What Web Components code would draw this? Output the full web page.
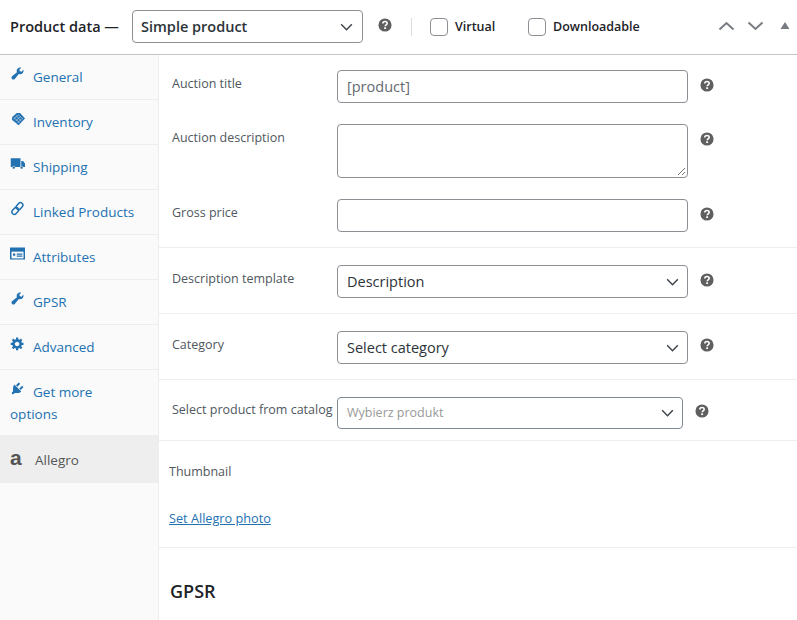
<!DOCTYPE html>
<html><head><meta charset="utf-8"><title>Product data</title>
<style>
html,body{margin:0;padding:0;background:#fff;overflow:hidden}
body{font-family:"Open Sans","Noto Sans",sans-serif;font-size:12.5px;color:#3c434a;width:797px;height:620px}
</style></head><body>
<wc-panel>
 <wc-topbar slot="top"></wc-topbar>
 <wc-tab slot="tabs" icon="wrench">General</wc-tab>
 <wc-tab slot="tabs" icon="tag">Inventory</wc-tab>
 <wc-tab slot="tabs" icon="truck">Shipping</wc-tab>
 <wc-tab slot="tabs" icon="link">Linked Products</wc-tab>
 <wc-tab slot="tabs" icon="attr">Attributes</wc-tab>
 <wc-tab slot="tabs" icon="wrench">GPSR</wc-tab>
 <wc-tab slot="tabs" icon="gear">Advanced</wc-tab>
 <wc-tab slot="tabs" icon="plug" style="padding-bottom:10px">Get more options</wc-tab>
 <wc-tab slot="tabs" icon="a" active>Allegro</wc-tab>

 <wc-section style="padding:15px 0 15px">
  <wc-field label="Auction title" style="margin-bottom:21px"><wc-control kind="input" placeholder>[product]</wc-control></wc-field>
  <wc-field label="Auction description" style="margin-bottom:21px"><wc-control kind="textarea"></wc-control></wc-field>
  <wc-field label="Gross price" ><wc-control kind="input"></wc-control></wc-field>
 </wc-section>
 <wc-section style="padding:17px 0 15px"><wc-field label="Description template"><wc-control kind="select">Description</wc-control></wc-field></wc-section>
 <wc-section style="padding:17px 0 15px"><wc-field label="Category" style="--help:7px"><wc-control kind="select">Select category</wc-control></wc-field></wc-section>
 <wc-section style="padding:17px 0 11px"><wc-field label="Select product from catalog" narrow style="--help:7px"><wc-control kind="combo">Wybierz produkt</wc-control></wc-field></wc-section>
 <wc-section style="padding:22px 0 20px 10px">
  <wc-thumb></wc-thumb>
 </wc-section>
 <wc-heading>GPSR</wc-heading>
</wc-panel>
<script>
const ICONS={
 wrench:'<path fill="currentColor" d="M16.68 9.77c-1.34 1.34-3.3 1.67-4.95.99l-5.41 6.52c-.99.99-2.59.99-3.58 0s-.99-2.59 0-3.57l6.52-5.42c-.68-1.65-.35-3.61.99-4.95 1.28-1.28 3.12-1.62 4.72-1.06l-2.89 2.89 2.82 2.82 2.86-2.87c.53 1.58.18 3.39-1.08 4.65z"/>',
 gear:'<path fill="currentColor" d="M18 12h-2.18c-.17.7-.44 1.35-.81 1.93l1.54 1.54-2.1 2.1-1.54-1.54c-.58.36-1.23.63-1.91.79V19H8v-2.18c-.68-.16-1.33-.43-1.91-.79l-1.54 1.54-2.12-2.12 1.54-1.54c-.36-.58-.63-1.23-.79-1.91H1V9.03h2.17c.16-.7.44-1.35.8-1.94L2.43 5.55l2.1-2.1 1.54 1.54c.58-.37 1.24-.64 1.93-.81V2h3v2.18c.68.16 1.33.43 1.91.79l1.54-1.54 2.12 2.12-1.54 1.54c.36.59.64 1.24.8 1.94H18V12zm-8.5 1.5c1.66 0 3-1.34 3-3s-1.34-3-3-3-3 1.34-3 3 1.34 3 3 3z"/>',
 tag:'<g transform="translate(0 1)"><path fill="currentColor" d="M9 1.500h4.500L20 9l-8.500 9L2.500 10.500l.5-3.500z"/><path stroke="#cfe0ee" stroke-width=".8" fill="none" d="M8 5.500l7.500 7M10.500 3.500l7 6.500M5.500 8l7.500 7M10 4.500l-5.500 5.500M13 7l-5.500 5.500M15.500 9.500L10 15"/></g>',
 truck:'<path fill="currentColor" d="M1 3h13v11.500H1zM15 6.500h2.500L20 10v4.500h-5z"/><circle cx="5" cy="15.500" r="1.900" fill="currentColor" stroke="#fafafa" stroke-width=".7"/><circle cx="15.500" cy="15.500" r="1.900" fill="currentColor" stroke="#fafafa" stroke-width=".7"/>',
 link:'<g fill="none" stroke="currentColor" stroke-width="2"><rect x="9.500" y="1.800" width="6.500" height="10" rx="3.200" transform="rotate(42 12.700 6.800)"/><rect x="3.800" y="8.200" width="6.500" height="10" rx="3.200" transform="rotate(42 7 13.200)"/></g>',
 attr:'<path fill="currentColor" d="M0 2h20v16H0z"/><path fill="#fafafa" d="M2 7.500h16v9H2z"/><path fill="currentColor" d="M4 10h3v3H4zM9 10h7.500v1.500H9zM9 12.800h7.500v1.500H9z"/>',
 plug:'<path fill="currentColor" d="M13.11 4.360L9.870 7.600 8 5.730l3.240-3.240c.35-.34 1.050-.2 1.560.32.52.51.66 1.210.31 1.550zm-8 1.770l.91-1.120 9.010 9.010-1.190.84c-.71.71-2.630 1.160-3.820 1.160H6.140L4.900 17.260c-.59.59-1.540.59-2.120 0-.59-.58-.59-1.530 0-2.120l1.240-1.240v-3.880c0-1.130.4-3.190 1.090-3.890zm7.260 3.970l3.240-3.240c.34-.35 1.040-.21 1.550.31.52.51.66 1.210.31 1.550l-3.240 3.250z"/>'
};
function def(name,css,html,init){
 customElements.define(name,class extends HTMLElement{
  constructor(){super();this.attachShadow({mode:'open'});}
  connectedCallback(){this.shadowRoot.innerHTML='<style>'+css+'</style>'+(typeof html==='function'?html(this):html);if(init)init(this);}
 });
}
const Q='<svg viewBox="0 0 16 16" width="14" height="14" aria-hidden="true"><circle cx="8" cy="8" r="7.500" fill="#5f5f5f"/><path d="M5.500 6.300C5.500 4.800 6.600 3.900 8 3.900s2.500.8 2.500 2.100c0 1.800-2.300 1.800-2.300 3.400" fill="none" stroke="#fff" stroke-width="1.800"/><rect x="7.100" y="10.600" width="2.100" height="2" fill="#fff"/></svg>';
const CHEV='<svg viewBox="0 0 14 9" width="13" height="8" aria-hidden="true"><path d="M1 1.500 7 7.500l6-6" fill="none" stroke="#3c434a" stroke-width="1.600"/></svg>';

def('wc-help',':host{display:inline-flex;width:14px;height:14px}',Q);

def('wc-panel',`:host{display:grid;grid-template-columns:159px 1fr;grid-template-rows:55px 1fr;height:620px;overflow:hidden}
 .top{grid-column:1/3;border-bottom:1px solid #c3c4c7;box-sizing:border-box;height:55px}
 .side{background:#fafafa;border-right:1px solid #eee;box-sizing:border-box;display:flex;flex-direction:column}
 .main{min-width:0;background:#fff}`,
 `<div class="top"><slot name="top"></slot></div><div class="side"><slot name="tabs"></slot></div><div class="main"><slot></slot></div>`);

def('wc-topbar',`:host{display:flex;align-items:center;height:53px;color:#1d2327;font-size:13px}
 .t{font-size:14.500px;font-weight:600;margin-left:10px;width:122px;white-space:nowrap}
 .sel{width:231px;height:33px;box-sizing:border-box;border:1px solid #8c8f94;border-radius:4px;display:flex;align-items:center;justify-content:space-between;padding:0 9px 0 8px;font-size:14.500px;font-weight:600;color:#2c3338}
 wc-help{margin-left:15px;margin-top:-3px}
 .div{width:1px;height:18px;background:#dcdcde;margin:0 18px 0 19px}
 .cb{width:18px;height:18px;box-sizing:border-box;border:1px solid #8c8f94;border-radius:4px;background:#fff;margin-right:7px}
 .lb{font-weight:600;font-size:12.500px;white-space:nowrap}
 .v{width:73px}
 .acts{margin-left:auto;display:flex;align-items:center;margin-right:7px}
 .acts svg{display:block}`,
 `<span class="t">Product data —</span>
  <div class="sel"><span>Simple product</span>${CHEV}</div>
  <wc-help></wc-help><span class="div"></span>
  <span class="cb"></span><span class="lb v">Virtual</span>
  <span class="cb"></span><span class="lb">Downloadable</span>
  <div class="acts">
   <svg width="17" height="10" viewBox="0 0 17 10" style="margin-right:12px;margin-top:-2px"><path d="M1.500 8.500 8.500 2l7 6.500" fill="none" stroke="#787c82" stroke-width="2"/></svg>
   <svg width="17" height="10" viewBox="0 0 17 10" style="margin-right:16px;margin-top:-2px"><path d="M1.500 1.500 8.500 8l7-6.500" fill="none" stroke="#787c82" stroke-width="2"/></svg>
   <svg width="10" height="7" viewBox="0 0 10 7" style="margin-top:-3px"><path d="M5 0l4.500 7H.5z" fill="#787c82"/></svg>
  </div>`);

def('wc-tab',`:host{display:block;box-sizing:border-box;border-bottom:1px solid #eee;padding:11px 23px 11px 10px;line-height:22px;min-height:45px;color:#2271b1;font-size:13.500px}
 :host([active]){background:#eee;color:#555;border-bottom:0;min-height:47px;padding-top:13px}
 .i{display:inline-block;width:15px;height:15px;margin-right:8px;vertical-align:-1px;position:relative;top:-2px}
 svg{display:block;width:15px;height:15px}
 .a{font:700 21px/15px "Liberation Sans",sans-serif;color:#555;display:inline-block;width:12px;margin-right:13px;vertical-align:0}`,
 t=>{const k=t.getAttribute('icon');
  return (k==='a'?'<span class="a">a</span>':`<span class="i"><svg viewBox="0 0 20 20" aria-hidden="true">${ICONS[k]}</svg></span>`)+'<slot></slot>';});

def('wc-section',`:host{display:block;border-bottom:1px solid #eee}`,'<slot></slot>');

def('wc-field',`:host{display:grid;grid-template-columns:165px 351px auto;padding-left:13px;align-items:start;color:#50575e}
 :host([narrow]){grid-template-columns:165px 346px auto}
 .l{font-size:12.500px;line-height:18px;padding-top:5px;white-space:nowrap}
 :host([narrow]) .l{padding-top:4px}
 wc-help{margin:var(--help,8px) 0 0 12px}`,
 t=>`<span class="l">${t.getAttribute('label')}</span><slot></slot><wc-help></wc-help>`);

def('wc-control',`:host{display:flex;box-sizing:border-box;height:33px;border:1px solid #8c8f94;border-radius:4px;align-items:center;justify-content:space-between;padding:0 8px 0 9px;font-size:14.500px;color:#2c3338;background:#fff;position:relative}
 :host([placeholder]){color:#646970}
 :host([kind=textarea]){height:54px}
 :host([kind=combo]){height:32px;border-color:#7e8993;color:#999;font-size:12.500px;padding-right:8px}
 :host([kind=combo]) span{margin-bottom:2px}
 .g{position:absolute;right:1px;bottom:1px}`,
 t=>{const k=t.getAttribute('kind');
  return '<span><slot></slot></span>'+((k==='select'||k==='combo')?CHEV:'')+(k==='textarea'?'<svg class="g" width="9" height="9" viewBox="0 0 9 9"><path d="M1 8 8 1M5 8l3-3" stroke="#777" stroke-width="1"/></svg>':'');});

def('wc-thumb',`:host{display:block;font-size:12.500px;line-height:18px;color:#50575e}
 a{display:block;margin-top:28px;color:#2271b1;text-decoration:underline;font-size:12.700px}`,
 `<div>Thumbnail</div><a href="#">Set Allegro photo</a>`);

def('wc-heading',`:host{display:block;padding:31px 0 0 11px;font-size:18px;font-weight:600;line-height:24px;color:#1d2327}`,'<slot></slot>');
</script>
</body></html>
